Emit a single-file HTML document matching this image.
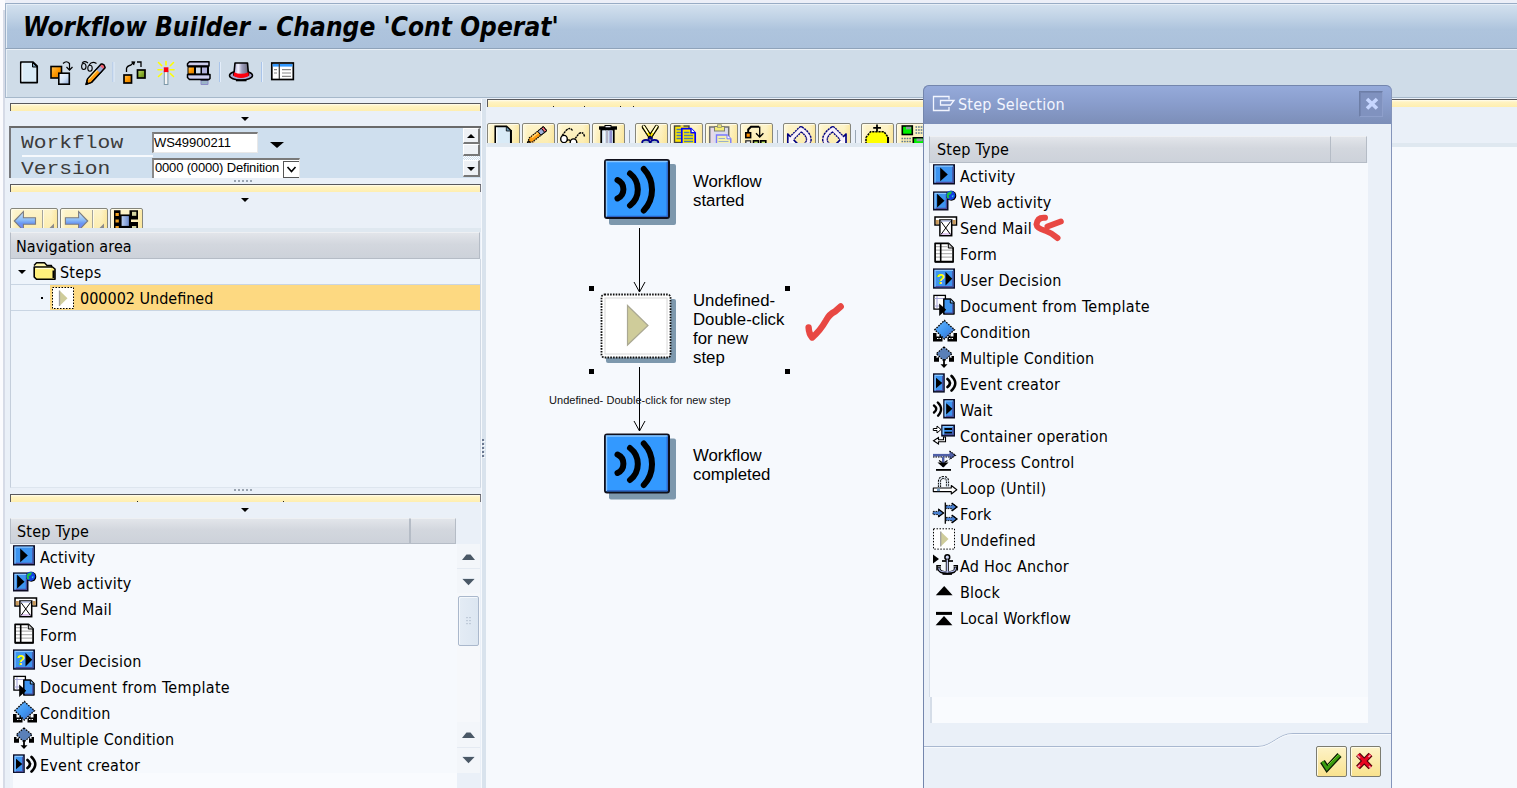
<!DOCTYPE html>
<html><head><meta charset="utf-8"><title>Workflow Builder</title>
<style>
html,body{margin:0;padding:0}
body{width:1517px;height:788px;overflow:hidden;position:relative;background:#eaf0f8;font-family:"DejaVu Sans Condensed","DejaVu Sans","Liberation Sans",sans-serif;font-size:16px;letter-spacing:.22px;color:#000}
.a{position:absolute}
.t{position:absolute;white-space:nowrap;line-height:20px}
#leftedge{left:0;top:0;width:5px;height:788px;background:linear-gradient(#fbfbfe 0 10px,transparent 10px),linear-gradient(90deg,#fbfbfe 0 3px,#d6dbe7 3px 5px)}
#topedge{left:0;top:0;width:1517px;height:3px;background:#ecEff8}
#title{left:5px;top:3px;width:1512px;height:44px;border-top:1px solid #98acc5;border-left:1px solid #9fb2c8;box-shadow:inset 1px 1px 0 #e6eef7;background:linear-gradient(#d3e1ef 0%,#c1d3e6 30%,#aec4dd 58%,#abc1db 100%)}
#title .t{left:17px;top:6px;letter-spacing:.05px;font:italic bold 26px/34px "DejaVu Sans Condensed","DejaVu Sans","Liberation Sans",sans-serif}
#tb{left:5px;top:48px;width:1512px;height:50px;background:#cfdce8;border-top:1px solid #8fa3ba;border-left:1px solid #a9bace;border-bottom:1px solid #a6b8ca;box-sizing:border-box;box-shadow:inset 1px 1px 0 #e9f0f7}
.ybar{position:absolute;height:7px;background:linear-gradient(#fffdf0 0,#fff3c2 2px,#feeeb0 100%);border-top:1px solid #58585c;border-left:1px solid #58585c;border-right:1px solid #77777c;box-sizing:content-box}
.tri{position:absolute;width:0;height:0;border-left:4px solid transparent;border-right:4px solid transparent;border-top:4px solid #000}

.mono{font-family:"Liberation Mono",monospace;font-size:19px;color:#3c3c3c;letter-spacing:0;transform-origin:0 50%;transform:scaleX(1.12)}
#form{left:9px;top:126px;width:472px;height:52px;background:#cfdfee;border-top:2px solid #6a6a6a;border-left:2px solid #77787c;box-sizing:border-box;overflow:hidden}
.inp{background:#fff;border-top:2px solid #7a7a7a;border-left:2px solid #8a8a8a;border-right:1px solid #e8e8e8;border-bottom:1px solid #e8e8e8;box-sizing:border-box;font-family:"Liberation Sans",sans-serif;font-size:13px;letter-spacing:0;overflow:hidden}
.inp .t{line-height:17px}
.sbtn{width:16px;height:15px;background:#eef1f5;border-top:1px solid #fff;border-left:1px solid #fff;border-right:2px solid #777;border-bottom:2px solid #777;box-sizing:border-box}
.grip{width:20px;height:2px;background:repeating-linear-gradient(90deg,#9aa4b0 0 2px,transparent 2px 4px)}
.ghdr{background:linear-gradient(#e2e5ea,#d3d7de 45%,#cdd2da);border:1px solid #b5bcc6;border-top-color:#eef0f3;box-sizing:border-box}
#tree{left:10px;top:259px;width:471px;height:229px;background:#eef4fb;border-left:1px solid #c4cedb;border-right:1px solid #d0d9e4;border-bottom:1px solid #dde5ee;box-sizing:border-box;overflow:hidden}
#list1{left:10px;top:544px;width:447px;height:229px;background:#f6f9fd;overflow:hidden}
.row{position:absolute;left:0;height:26px;width:100%}
.row .t{left:30px;top:4px}

.ybtn{top:0;width:33px;height:26px;box-sizing:border-box;background:linear-gradient(90deg,rgba(255,250,225,.9) 0,rgba(255,250,225,0) 5px,rgba(250,225,140,0) calc(100% - 6px),rgba(250,225,140,.6) 100%),linear-gradient(#fdf4cc,#fcebaa);border:1px solid #86867c;border-radius:2px;box-shadow:inset 1px 1px 0 #fffbe6}
#canvas{left:487px;top:147px;width:1030px;height:641px;background:#f6f9fd;overflow:hidden}

#dlg{left:923px;top:85px;width:469px;height:710px;background:#eaf0f8;border-radius:6px 6px 0 0;overflow:hidden}
#dlgb{left:923px;top:85px;width:469px;height:710px;border:1px solid #7486ad;border-right:1px solid #8595ba;border-radius:6px 6px 0 0;box-sizing:border-box;pointer-events:none}
#dtitle{left:0;top:0;width:469px;height:39px;background:linear-gradient(#96abdb 0%,#8a9ecd 45%,#7c8eb8 100%)}
#dclose{left:436px;top:6px;width:24px;height:26px;box-sizing:border-box;border:1px solid #6d7ea6;border-right-color:#8e9fcb;border-bottom-color:#8e9fcb;background:#8092bf;box-shadow:inset 1px 1px 0 #7485b1}
#list2{left:7px;top:78px;width:438px;height:534px;background:#f6f9fd;box-shadow:-1px 0 0 #d5dde8;overflow:hidden}
.dbtn{width:31px;height:31px;box-sizing:border-box;border:1px solid #7c7c70;border-radius:2px;background:linear-gradient(#fdf3c8,#f9e28e);box-shadow:inset 1px 1px 0 #fffbe6}
.ic{position:absolute;left:0;top:0}
svg{letter-spacing:0}

#navbtns{left:10px;top:208px;width:140px;height:20px;overflow:hidden}
#vsb{left:457px;top:544px;width:23px;height:229px}
</style></head><body>
<div class="a" id="topedge"></div>
<div class="a" id="leftedge"></div>
<div class="a" id="title"><div class="t">Workflow Builder - Change 'Cont Operat'</div></div>
<div class="a" id="tb"></div>
<svg class="a" style="left:10px;top:54px" width="300" height="40" viewBox="10 54 300 40">
 <defs>
  <linearGradient id="gOr" x1="0" y1="0" x2="1" y2="1"><stop offset="0" stop-color="#ffc45a"/><stop offset=".5" stop-color="#ff9800"/><stop offset="1" stop-color="#d67a00"/></linearGradient>
  <linearGradient id="gGr" x1="0" y1="0" x2="1" y2="1"><stop offset="0" stop-color="#c4dc7a"/><stop offset=".5" stop-color="#8cb030"/><stop offset="1" stop-color="#5c7c10"/></linearGradient>
  <linearGradient id="gBl" x1="0" y1="0" x2="1" y2="1"><stop offset="0" stop-color="#f4f9ff"/><stop offset=".55" stop-color="#d4e4f6"/><stop offset="1" stop-color="#8ca8d8"/></linearGradient>
  <linearGradient id="gLav" x1="0" y1="0" x2="0" y2="1"><stop offset="0" stop-color="#8c90c4"/><stop offset=".5" stop-color="#dcdcf4"/><stop offset="1" stop-color="#9c9ccc"/></linearGradient>
  <linearGradient id="gHat" x1="0" y1="0" x2="1" y2="0"><stop offset="0" stop-color="#9c9cc8"/><stop offset=".3" stop-color="#f4f4ff"/><stop offset=".55" stop-color="#a0a0c0"/><stop offset="1" stop-color="#686878"/></linearGradient>
 </defs>
 <!-- new -->
 <path d="M20.800 62H33L37.200 66.200V82.600H20.800Z" fill="#d9ebf7" stroke="#000" stroke-width="1.700" stroke-linejoin="round"/>
 <path d="M22 63.500V81.500" stroke="#fff" stroke-width="1"/><path d="M32.500 62.500V67H37Z" fill="#7aa0b8" stroke="#000" stroke-width="1"/>
 <!-- other object -->
 <rect x="51" y="66.500" width="10.500" height="11.500" fill="url(#gOr)" stroke="#000" stroke-width="1.600"/>
 <rect x="58.800" y="73.200" width="10.500" height="11" fill="url(#gBl)" stroke="#000" stroke-width="1.600"/>
 <path d="M63 63.500Q66.500 60 69.500 63.500V69.500M66.500 67L69.500 70.200L72.500 67" fill="none" stroke="#000" stroke-width="1.200"/>
 <!-- glasses pencil -->
 <g fill="none" stroke="#000" stroke-width="1.100"><ellipse cx="83.800" cy="66.500" rx="2.200" ry="3" fill="#d0dce8"/><ellipse cx="90" cy="68.300" rx="2.200" ry="3" fill="#d0dce8"/><path d="M82 63.500Q84 60 88 63M89 65Q92 60.500 96.500 63.500"/></g>
 <path d="M86 84.500L87.500 78.900L101 64.200Q104.500 63.300 105 67.800L91.500 82.500Z" fill="#ff9c10" stroke="#000" stroke-width="1.200" stroke-linejoin="round"/>
 <path d="M96.200 69.400L101 64.200Q104.500 63.300 105 67.800L100.200 73Z" fill="#9cacd8"/><path d="M99.600 65.700L101 64.200Q104.500 63.300 105 67.800L103.600 69.300Z" fill="#f06070"/>
 <path d="M88.500 79.300L97 70" stroke="#ffe890" stroke-width="1.500"/><path d="M86 84.500L86.900 81.300L89.200 83.400Z" fill="#000"/>
 <path d="M86 84.500L87.500 78.900L101 64.200Q104.500 63.300 105 67.800L91.500 82.500Z" fill="none" stroke="#000" stroke-width="1.300" stroke-linejoin="round"/>
 <!-- sep -->
 <path d="M113 62V82M219.500 62V82M261.500 62V82" stroke="#a9c4ea" stroke-width="1"/><path d="M114 62V82M220.500 62V82M262.500 62V82" stroke="#e4eefa" stroke-width="1"/>
 <!-- flow -->
 <rect x="124" y="75" width="7.500" height="8" fill="url(#gOr)" stroke="#000" stroke-width="1.700"/>
 <rect x="137.500" y="70" width="7.500" height="8" fill="url(#gGr)" stroke="#000" stroke-width="1.700"/>
 <path d="M126.500 72V68.500Q127 66 131 65L134 62M141 67V62H137M131.500 62L134.500 62.200L133.500 65" fill="none" stroke="#000" stroke-width="1.300"/>
 <!-- wand -->
 <rect x="164.300" y="71" width="3.600" height="13.500" fill="#f4f4f4" stroke="#7c98a8" stroke-width="1"/>
 <rect x="163.800" y="67.300" width="4.600" height="4.800" fill="#ff0010"/>
 <g stroke="#ffff00" stroke-width="1.600" stroke-linecap="round"><path d="M166 61.500V65M158 69.700H162M170 69.700H174M158.500 62.500L161.700 65.700M173.500 62.500L170.300 65.700M158.500 76.500L161.700 73.500M173.500 76.500L170.300 73.500"/></g>
 <!-- workflow container icon -->
 <path d="M189.500 61.800H209V66H187.500V63.800Z" fill="url(#gLav)" stroke="#000" stroke-width="1.500" stroke-linejoin="round"/>
 <rect x="187.500" y="66" width="21.500" height="8.500" fill="#000"/>
 <rect x="188.500" y="67.500" width="5.500" height="6" fill="url(#gOr)"/><rect x="196" y="67.500" width="4.500" height="6" fill="#d0dcec"/><rect x="202" y="67.500" width="5" height="6" fill="#b0b0dc"/>
 <path d="M187.500 74.500H210V78.500L209 79.500H189.500L187.500 77.500Z" fill="url(#gLav)" stroke="#000" stroke-width="1.500" stroke-linejoin="round"/>
 <path d="M201 80.500H208V84.500H201Z" fill="#9ab4c8" stroke="#8c8cc8" stroke-width="1"/><path d="M200.500 80H208.500" stroke="#000" stroke-width="1.200"/>
 <!-- hat -->
 <ellipse cx="241" cy="75.500" rx="11.500" ry="4.500" fill="#a8a8d0" stroke="#000" stroke-width="1.500"/>
 <path d="M235 63H247.500L248.500 75Q241 78.500 233.800 75Z" fill="url(#gHat)" stroke="#000" stroke-width="1.600" stroke-linejoin="round"/>
 <path d="M234 72.200Q241 75.500 248.500 72.200L248.800 76Q241 79.800 233.500 76Z" fill="#ff0010"/>
 <path d="M236 80.500H246.500" stroke="#000" stroke-width="1.600"/>
 <!-- layout -->
 <rect x="271.800" y="63" width="21.500" height="16.500" fill="#fff" stroke="#000" stroke-width="1.700"/>
 <rect x="272.700" y="64" width="19.700" height="2.600" fill="#3399ff"/>
 <path d="M279.300 63.500V79" stroke="#333" stroke-width="1.200"/>
 <g stroke="#888" stroke-width="1.200"><path d="M274 69.700H277M274 73H277M282 69.700H291M282 73H291M282 76.300H291"/></g>
</svg>
<!--LEFT-->
<div class="ybar" style="left:10px;top:103px;width:469px"></div>
<div class="tri" style="left:241px;top:117px"></div>
<div class="a" id="form">
  <div class="t mono" style="left:10px;top:5px">Workflow</div>
  <div class="a" style="left:11px;top:27px;width:131px;height:2px;background:#f6f9fd"></div>
  <div class="t mono" style="left:10px;top:31px">Version</div>
  <div class="a inp" style="left:141px;top:4px;width:106px;height:21px"><span class="t" style="left:0px;top:0px;letter-spacing:-.1px">WS49900211</span></div>
  <div class="tri" style="left:259px;top:14px;border-width:6px 7px 0 7px"></div>
  <div class="a inp" style="left:141px;top:30px;width:148px;height:22px"><span class="t" style="left:1px;top:-1px;font-size:13px;letter-spacing:-0.17px">0000 (0000) Definition</span>
    <div class="a" style="left:129px;top:1px;width:17px;height:17px;border:1px solid #555;background:#fff;box-sizing:border-box"><svg class="a" style="left:2px;top:3px" width="11" height="9" viewBox="0 0 11 9"><path d="M1.5 2 L5.5 6.5 L9.5 2" fill="none" stroke="#000" stroke-width="1.6"/></svg></div></div>
  <div class="a sbtn" style="left:452px;top:0px;width:17px;height:16px"><div class="tri" style="left:3px;top:5px;border-width:0 4px 4px 4px;border-top-color:transparent;border-bottom:4px solid #000"></div></div>
  <div class="a sbtn" style="left:452px;top:16px;width:17px;height:12px"></div><div class="a" style="left:452px;top:28px;width:17px;height:4px;background:repeating-conic-gradient(#fff 0 25%,#cfdfee 0 50%) 0 0/2px 2px"></div>
  <div class="a sbtn" style="left:452px;top:32px;width:17px;height:17px"><div class="tri" style="left:3px;top:6px"></div></div>
</div>
<div class="a grip" style="left:234px;top:180px"></div>
<div class="ybar" style="left:10px;top:184px;width:469px"></div>
<div class="tri" style="left:241px;top:198px"></div>
<div class="a" id="navbtns">
 <div class="a ybtn" style="left:0;width:48px"></div><div class="a ybtn" style="left:50px;width:48px"></div><div class="a ybtn" style="left:100px;width:33px"></div>
 <svg class="a" style="left:0;top:0" width="140" height="20" viewBox="10 208 140 20">
  <defs><linearGradient id="gAr" x1="0" y1="0" x2="0" y2="1"><stop offset="0" stop-color="#d0e8fc"/><stop offset=".45" stop-color="#8cbcf6"/><stop offset=".62" stop-color="#6a98f2"/><stop offset="1" stop-color="#7c7cf6"/></linearGradient>
  <linearGradient id="gMid" x1="0" y1="0" x2="1" y2="0"><stop offset="0" stop-color="#c0d4f4"/><stop offset="1" stop-color="#6888cc"/></linearGradient></defs>
  <path d="M14.300 221L23.400 211.500V217.700H35.500V224.300H23.400V230.500Z" fill="url(#gAr)" stroke="#7c7c80" stroke-width="1.100"/>
  <path d="M87.700 221L78.600 211.500V217.700H65.400V224.300H78.600V230.500Z" fill="url(#gAr)" stroke="#7c7c80" stroke-width="1.100"/>
  <path d="M42.500 210V228M92.500 210V228" stroke="#a4a49c" stroke-width="1"/><path d="M43.500 210V228M93.500 210V228" stroke="#fffbe8" stroke-width="1"/>
  <path d="M49 228.500L54 223.500V228.500ZM99 228.500L104 223.500V228.500Z" fill="#8c8c8c"/>
  <path d="M114 210.300H120.500V214.500H129.500V210.300H138V219.500H131V222H138V230H114Z" fill="#000"/>
  <rect x="121" y="215.500" width="8.500" height="11" fill="url(#gMid)" stroke="#000" stroke-width="1.200"/>
  <g fill="#f0a020"><rect x="115.500" y="213" width="3.300" height="3"/><rect x="115.500" y="219.500" width="3.300" height="3"/><rect x="115.500" y="226" width="3.300" height="3"/></g>
  <g fill="#d4d4a0"><rect x="132" y="211.800" width="4.300" height="4"/><rect x="132" y="226" width="4.300" height="4"/></g>
 </svg>
</div>
<div class="a" style="left:10px;top:228px;width:471px;height:4px;background:#dfe8f0"></div>
<div class="a ghdr" style="left:10px;top:232px;width:470px;height:27px"><span class="t" style="left:5px;top:4px;letter-spacing:.1px">Navigation area</span></div>
<div class="a" id="tree">

  <div class="tri" style="left:7px;top:11px;border-width:4px 4px 0 4px"></div>
  <span class="t" style="left:49px;top:4px">Steps</span>
  <div class="a" style="left:0;top:25px;width:470px;height:1px;background:#c9d5e3"></div>
  <div class="a" style="left:39px;top:26px;width:431px;height:25px;background:#fdd981"></div>
  <div class="a" style="left:0;top:51px;width:470px;height:1px;background:#c9d5e3"></div>
  <div class="a" style="left:30px;top:38px;width:2px;height:2px;background:#000"></div>
  <span class="t" style="left:69px;top:30px;letter-spacing:0">000002 Undefined</span>
<svg class="a" style="left:-1px;top:0" width="80" height="52" viewBox="10 258 80 52">
  <path d="M34 264.500L36.500 261.800H44.500L47 264.500H51.500V270" fill="#fff8b0" stroke="#000" stroke-width="1.400" stroke-linejoin="round"/>
  <path d="M34.200 266H52.500L55 268V278.300H36.500L34.200 276Z" fill="#fff07c" stroke="#000" stroke-width="1.600" stroke-linejoin="round"/><path d="M53.500 269.500V277" stroke="#000" stroke-width="2"/><path d="M36 267.500H51" stroke="#fffcd8" stroke-width="1.200"/>
  <rect x="52.500" y="286.500" width="21" height="21" fill="#fff" stroke="#000" stroke-width="1" stroke-dasharray="1.500 1.500"/>
  <path d="M59.500 289.500V305L67.500 297.200Z" fill="#cfcc9a"/><path d="M59.500 289.500V305" stroke="#a0a0a0" stroke-width="1.300"/>
 </svg>
</div>
<div class="a grip" style="left:234px;top:489px"></div>
<div class="ybar" style="left:10px;top:494px;width:469px;height:7px"></div>
<div class="tri" style="left:241px;top:508px"></div>
<div class="a" style="left:137px;top:501px;width:1px;height:1px;background:#222"></div><div class="a" style="left:283px;top:501px;width:1px;height:1px;background:#222"></div>
<div class="a ghdr" style="left:10px;top:518px;width:400px;height:26px"><span class="t" style="left:6px;top:3px" style="letter-spacing:1px">Step Type</span></div>
<div class="a ghdr" style="left:410px;top:518px;width:46px;height:26px"></div>
<div class="a" id="list1">
 <div class="row" style="top:0"><svg class="ic" width="30" height="26" viewBox="0 0 30 26"><rect x="3.75" y="1.95" width="20.5" height="18.8" fill="#3d94f0" stroke="#0c0c24" stroke-width="1.500"/><path d="M5 19.5V3.2H23" fill="none" stroke="#8cc6ff" stroke-width="1.200"/><path d="M22.9 3.8V19.4H5.6" fill="none" stroke="#4c4c9c" stroke-width="1.200"/><path d="M10.2 4.6V18.3L17.8 11.45Z" fill="#000"/></svg><span class="t">Activity</span></div>
 <div class="row" style="top:26px"><svg class="ic" width="30" height="26" viewBox="0 0 30 26"><rect x="3.75" y="3.15" width="14.0" height="17.6" fill="#3d94f0" stroke="#0c0c24" stroke-width="1.500"/><path d="M5 19.5V4.4H16.5" fill="none" stroke="#8cc6ff" stroke-width="1.200"/><path d="M16.4 5.0V19.4H5.6" fill="none" stroke="#4c4c9c" stroke-width="1.200"/><path d="M7.1 4.8V18.6L14.5 11.700000000000001Z" fill="#000"/><circle cx="21.300" cy="6.700" r="5" fill="#000"/><circle cx="20.600" cy="6.300" r="4.600" fill="#1040e0"/><path d="M17 4.500Q19 2 22 2.500L21 5L18.500 6.500L19.500 9L17.500 9.500Q16 7 17 4.500Z" fill="#20c040"/><path d="M21.500 7L23.500 6L23 8.500Z" fill="#30d8f0"/></svg><span class="t">Web activity</span></div>
 <div class="row" style="top:52px"><svg class="ic" width="30" height="26" viewBox="0 0 30 26"><rect x="5" y="2" width="21.500" height="8" fill="#fff" stroke="#000" stroke-width="1.500"/><rect x="5.800" y="5" width="3" height="4.300" fill="#c89858"/><rect x="22.700" y="5" width="3" height="4.300" fill="#c89858"/><rect x="9.900" y="5" width="11.800" height="15.700" fill="#fff" stroke="#000" stroke-width="1.500"/><rect x="10.700" y="5.300" width="10.200" height="1.700" fill="#c8d0f0"/><rect x="10.700" y="18" width="10.200" height="1.900" fill="#e0c8f0"/><path d="M11 6.500L20.500 19.500M20.500 6.500L11 19.500" stroke="#000" stroke-width="1"/></svg><span class="t">Send Mail</span></div>
 <div class="row" style="top:78px"><svg class="ic" width="30" height="26" viewBox="0 0 30 26"><path d="M5.100 2.300H18.500L23.100 6.900V20.700H5.100Z" fill="#fff" stroke="#000" stroke-width="1.700" stroke-linejoin="round"/><path d="M18.300 2.500V7H23" fill="#ccc" stroke="#000" stroke-width="1"/><g stroke="#b4b4b4" stroke-width="1.300"><path d="M6 5.700H17.500M6 9.200H22M6 12.700H22M6 16.200H22"/></g><path d="M10.700 2.500V20.500" stroke="#000" stroke-width="1.600"/><path d="M5 21H23.500" stroke="#000" stroke-width="1.400"/></svg><span class="t">Form</span></div>
 <div class="row" style="top:104px"><svg class="ic" width="30" height="26" viewBox="0 0 30 26"><rect x="3.75" y="2.15" width="20.5" height="18.8" fill="#3d94f0" stroke="#0c0c24" stroke-width="1.500"/><path d="M5 19.7V3.4H23" fill="none" stroke="#8cc6ff" stroke-width="1.200"/><path d="M22.9 4.0V19.599999999999998H5.6" fill="none" stroke="#4c4c9c" stroke-width="1.200"/><path d="M15.5 4.8V18.5L22.2 11.65Z" fill="#000"/><text x="6.500" y="16.500" font-family="Liberation Sans, sans-serif" font-weight="bold" font-size="14" fill="#ffff00">?</text></svg><span class="t">User Decision</span></div>
 <div class="row" style="top:130px"><svg class="ic" width="30" height="26" viewBox="0 0 30 26"><rect x="3.900" y="2.400" width="11.500" height="13.700" fill="#fff" stroke="#000" stroke-width="1.300"/><path d="M7 3V15.500M4.500 5.500H15M4.500 13H9" stroke="#a8a8d8" stroke-width="1.100" fill="none"/><path d="M13.800 6.100H20.500L24 9.600V20.900H13.800Z" fill="#3d94f0" stroke="#000" stroke-width="1.500" stroke-linejoin="round"/><path d="M20.300 6.300V10H24" fill="#8cc6ff" stroke="#000" stroke-width="1"/><path d="M22.800 11V20H15" fill="none" stroke="#4c4c9c" stroke-width="1.200"/><path d="M9.2 10.5V23L16.2 16.75Z" fill="#000"/></svg><span class="t" style="letter-spacing:.34px">Document from Template</span></div>
 <div class="row" style="top:156px"><svg class="ic" width="30" height="26" viewBox="0 0 30 26"><defs><linearGradient id="gc" x1="0" y1="0" x2="1" y2="1"><stop offset="0" stop-color="#6ab8ff"/><stop offset=".55" stop-color="#3d94f0"/><stop offset="1" stop-color="#5060b0"/></linearGradient></defs><path d="M14.300 1.500L24.500 10.700L14.300 20L4.800 10.700Z" fill="url(#gc)" stroke="#000" stroke-width="1.300" stroke-dasharray="1.600 1.100"/><path d="M3 14H6.500V17.500H9.500V15.500L12.500 18.500V22.500H3ZM27 14H23.500V17.500H20.500V15.500L17.500 18.500V22.500H27Z" fill="#000"/><path d="M7 19.500H11M19 19.500H23" stroke="#fff" stroke-width="1" stroke-dasharray="1.500 1"/></svg><span class="t">Condition</span></div>
 <div class="row" style="top:182px"><svg class="ic" width="30" height="26" viewBox="0 0 30 26"><path d="M14 2L22 8.700L14 16L6.300 8.700Z" fill="#5a80b8" stroke="#000" stroke-width="1.200" stroke-dasharray="1.600 1.100"/><path d="M4 11H6.500V13L9 12V16.700H4ZM24 11H21.500V13L19 12V16.700H24Z" fill="#000"/><path d="M14 14V20" stroke="#000" stroke-width="1.800"/><path d="M10.500 19.200H17.500L14 23Z" fill="#000"/></svg><span class="t">Multiple Condition</span></div>
 <div class="row" style="top:208px"><svg class="ic" width="30" height="26" viewBox="0 0 30 26"><rect x="3.75" y="3.05" width="10.3" height="17.8" fill="#3d94f0" stroke="#0c0c24" stroke-width="1.500"/><path d="M5 19.6V4.3H12.8" fill="none" stroke="#8cc6ff" stroke-width="1.200"/><path d="M12.700000000000001 4.9V19.5H5.6" fill="none" stroke="#4c4c9c" stroke-width="1.200"/><path d="M6 6.8V17.2L12.3 12.0Z" fill="#000"/><g fill="none" stroke="#000" stroke-linecap="round"><path d="M17.500 8Q22.500 12 17.500 16" stroke-width="2.800"/><path d="M21.500 5Q29 12.200 21.500 19.500" stroke-width="2.600" stroke-dasharray="2.500 .6"/></g></svg><span class="t">Event creator</span></div>
</div>
<div class="a" id="vsb">
 <div class="a" style="left:0;top:0;width:23px;height:229px;background:#f6f8fb"></div>
 <div class="a" style="left:0;top:0;width:23px;height:49px;background:#f3f6fa"></div>
 <div class="a" style="left:0;top:24px;width:23px;height:1px;background:#e4eaf2"></div>
 <div class="a" style="left:0;top:178px;width:23px;height:51px;background:#f3f6fa"></div>
 <div class="a" style="left:0;top:203px;width:23px;height:1px;background:#e4eaf2"></div>
 <div class="a" style="left:1px;top:52px;width:21px;height:50px;box-sizing:border-box;border:1px solid #aab8cc;border-radius:2px;background:linear-gradient(90deg,#e4ecf5,#dce6f1);box-shadow:inset 1px 1px 0 #f4f8fc"></div>
 <svg class="a" style="left:0;top:0" width="23" height="229" viewBox="0 0 23 229"><g fill="#4a5866"><path d="M5 16H18L13.500 10.500H9.500Z"/><path d="M5.500 35H17.500L11.500 41.300Z"/><path d="M5 194H18L13.500 188.500H9.500Z"/><path d="M5.500 213H17.500L11.500 219.300Z"/></g><g stroke="#dde4ec" stroke-width="1"><path d="M5.500 34.500H17.500M5.500 212.500H17.500"/></g>
 <g fill="#a0aec0"><rect x="9.500" y="73" width="1" height="1.200"/><rect x="12.500" y="73" width="1" height="1.200"/><rect x="9.500" y="76" width="1" height="1.200"/><rect x="12.500" y="76" width="1" height="1.200"/><rect x="9.500" y="79" width="1" height="1.200"/><rect x="12.500" y="79" width="1" height="1.200"/></g></svg>
</div>
<div class="a" style="left:10px;top:773px;width:3px;height:15px;background:#eef3f9"></div>
<div class="a" style="left:13px;top:773px;width:444px;height:15px;background:#f9fbfe"></div>
<div class="a" style="left:481px;top:99px;width:1px;height:689px;background:#f6f9fd"></div><div class="a" style="left:482px;top:99px;width:4px;height:689px;background:#d9e3ed"></div><div class="a" style="left:486px;top:147px;width:1px;height:641px;background:#f6f9fd"></div>
<div class="a" style="left:482px;top:439px;width:2px;height:18px;background:repeating-linear-gradient(#6a7890 0 2px,transparent 2px 4px)"></div><div class="a" style="left:483px;top:440px;width:2px;height:18px;background:repeating-linear-gradient(transparent 0 1px,#fff 1px 2px,transparent 2px 4px);opacity:.8"></div>
<!--RIGHT-->
<div class="ybar" style="left:487px;top:99px;width:1030px;height:7px;border-right:0"></div>
<div class="a" style="left:553px;top:106px;width:1px;height:1px;background:#222"></div><div class="a" style="left:584px;top:106px;width:1px;height:1px;background:#222"></div><div class="a" style="left:620px;top:106px;width:1px;height:1px;background:#222"></div><div class="a" style="left:633px;top:106px;width:1px;height:1px;background:#222"></div>
<div class="a" style="left:487px;top:123px;width:440px;height:20px;overflow:hidden"><div class="a ybtn" style="left:0px" id="rb0"></div><div class="a ybtn" style="left:35px" id="rb1"></div><div class="a ybtn" style="left:70px" id="rb2"></div><div class="a ybtn" style="left:105px" id="rb3"></div><div class="a ybtn" style="left:148px" id="rb4"></div><div class="a ybtn" style="left:183px" id="rb5"></div><div class="a ybtn" style="left:218px" id="rb6"></div><div class="a ybtn" style="left:253px" id="rb7"></div><div class="a ybtn" style="left:296px" id="rb8"></div><div class="a ybtn" style="left:331px" id="rb9"></div><div class="a ybtn" style="left:374px" id="rb10"></div><div class="a ybtn" style="left:409px" id="rb11"></div></div>
<div class="a" style="left:629px;top:130px;width:1px;height:13px;background:#9aa7b5"></div><div class="a" style="left:777px;top:130px;width:1px;height:13px;background:#9aa7b5"></div><div class="a" style="left:855px;top:130px;width:1px;height:13px;background:#9aa7b5"></div>
<svg class="a" style="left:487px;top:123px" width="436" height="20" viewBox="487 123 436 20">
 <!-- new -->
 <path d="M495.300 144V126.300H506.500L510.800 130.600V144Z" fill="#d9ebf7" stroke="#000" stroke-width="1.700"/><path d="M511.200 130V144" stroke="#000" stroke-width="1.400"/>
 <path d="M496.700 127.500V144" stroke="#fff" stroke-width="1.200"/><path d="M506.300 126.500V131H510.800Z" fill="#6a9ab8" stroke="#000" stroke-width=".8"/>
 <!-- pencil -->
 <path d="M527.500 142.800L529.400 137.800L543.400 126.700L546.600 130.700L532.600 141.800Z" fill="#ff9c10" stroke="#000" stroke-width="1.200" stroke-dasharray="1.600 .8" stroke-linejoin="round"/>
 <path d="M537.700 131.200L543.400 126.700L546.600 130.700L540.900 135.200Z" fill="#9cb0dc" stroke="#000" stroke-width="1"/>
 <path d="M541.400 128.300L543.400 126.700L546.600 130.700L544.600 132.300Z" fill="#f06878" stroke="#000" stroke-width="1"/>
 <path d="M532 137.500L538 132.700" stroke="#ffe088" stroke-width="1.200"/><path d="M527.500 142.800L528.600 140L530.500 142Z" fill="#000"/><path d="M531 142.500L534 142.500L535 140.500Z" fill="#b08050"/>
 <!-- glasses -->
 <g fill="none" stroke="#000" stroke-width="1.400" stroke-dasharray="2.200 .7"><path d="M572.500 130.500Q570 126.500 566 130.500L561.500 136.500"/><path d="M584.500 136.500Q583.500 131 579 133.500L574.500 139.500"/></g>
 <ellipse cx="564" cy="139" rx="3.300" ry="3.600" fill="#fff" stroke="#000" stroke-width="1.400"/><ellipse cx="573.500" cy="142.500" rx="3.300" ry="3.600" fill="#fff" stroke="#000" stroke-width="1.400"/><path d="M567 140.500Q569 139 570.500 141" fill="none" stroke="#000" stroke-width="1.300"/>
 <!-- trash -->
 <rect x="601.200" y="129.500" width="12.600" height="15" fill="#cfe0f0" stroke="#000" stroke-width="1.700"/>
 <rect x="606" y="130.500" width="2" height="13" fill="#b4b4c4"/><rect x="609.500" y="130.500" width="2.500" height="13" fill="#9090d0"/><rect x="603.500" y="130.500" width="1.200" height="13" fill="#fff"/>
 <rect x="599" y="126.300" width="18" height="3.400" fill="#000"/><rect x="604.500" y="125" width="7" height="1.800" fill="#000"/><rect x="605.500" y="126" width="5" height="1.300" fill="#e8e8f0"/>
 <!-- scissors -->
 <g stroke-linecap="round"><path d="M643.800 127L650.800 137.500M656.700 127L649.700 137.500" stroke="#000" stroke-width="4.200" stroke-dasharray="1.500 1.200"/><path d="M643.800 127L650.800 137.500M656.700 127L649.700 137.500" stroke="#000" stroke-width="3.400" opacity=".55"/><path d="M643.700 126.500L650.200 136.800M656.800 126.500L650.300 136.800" stroke="#ffe800" stroke-width="2"/><path d="M643.600 126.200L647.500 132.500M656.900 126.200L653 132.500" stroke="#fff" stroke-width="1.400"/></g>
 <circle cx="650.200" cy="136.700" r="1.300" fill="#000"/>
 <ellipse cx="646" cy="142.500" rx="3.800" ry="2.700" fill="#a8c0c8" stroke="#000090" stroke-width="1.800"/><ellipse cx="654.500" cy="142.500" rx="3.800" ry="2.700" fill="#a8c0c8" stroke="#000090" stroke-width="1.800"/>
 <path d="M648 139.500L650.200 137.500L652.500 139.500" fill="none" stroke="#000090" stroke-width="1.800"/>
 <!-- copy -->
 <rect x="674.500" y="126" width="14.500" height="16.500" fill="#ffe800" stroke="#444" stroke-width="1.400"/><rect x="680.500" y="125" width="3" height="2" fill="#e8d860"/>
 <g stroke="#4a78b0" stroke-width="1.300"><path d="M676.500 129.500H681M676.500 132.500H681M676.500 135.500H681M676.500 138.500H681"/></g>
 <path d="M681.800 144V128.600H691L695.200 132.800V144Z" fill="#ffe800" stroke="#0000ff" stroke-width="1.700"/><path d="M691 128.600V132.800H695.200" fill="#fff" stroke="#0000ff" stroke-width="1.400"/>
 <g stroke="#4a78b0" stroke-width="1.300"><path d="M684 132.500H689.500M684 135.500H693M684 138.500H693M684 141.500H693"/></g>
 <!-- paste (dim) -->
 <rect x="709.700" y="127" width="19" height="17" fill="#dcdcec" stroke="#707070" stroke-width="1.500"/><rect x="711" y="128" width="2.500" height="15" fill="#e8d8e8"/>
 <rect x="714.500" y="126.500" width="10" height="4.500" fill="#f4ec78" stroke="#808070" stroke-width="1"/><rect x="717.500" y="124.800" width="4" height="2.500" fill="#f4ec78" stroke="#909070" stroke-width=".8"/>
 <path d="M716.500 144V135H727L730.800 138.800V144Z" fill="#f4f0b0" stroke="#7878ff" stroke-width="1.400"/><path d="M727 135V138.800H730.800" fill="#fff" stroke="#7878ff" stroke-width="1"/>
 <g stroke="#9ab0c8" stroke-width="1.200"><path d="M718.500 138.500H725M718.500 141.500H728.500"/></g>
 <!-- flow -->
 <rect x="745.800" y="132.800" width="4.800" height="4.800" fill="#ff9000" stroke="#000" stroke-width="1.600"/>
 <path d="M748.200 132V129.500L751 126.800H759" fill="none" stroke="#000" stroke-width="2"/><path d="M759.700 126.500V137M756 133.300L759.700 137L763.400 133.300" fill="none" stroke="#000" stroke-width="1.300"/>
 <rect x="745.800" y="140.800" width="4.800" height="5" fill="#f0f0f0" stroke="#333" stroke-width="1.300"/><rect x="753.500" y="140.800" width="5" height="5" fill="#b8e060" stroke="#000" stroke-width="1.600"/><rect x="760.800" y="140.800" width="5" height="5" fill="#b8e060" stroke="#000" stroke-width="1.600"/>
 <!-- undo / redo -->
 <g fill="none" stroke-linejoin="round" transform="translate(0 1.500)"><path d="M806 144Q813.500 136 801 127.500L790.500 138" stroke="#000080" stroke-width="6" stroke-dasharray="1.700 1"/><path d="M806 144Q813.500 136 801 127.500L790.500 138" stroke="#000080" stroke-width="5.200" opacity=".45"/>
 <path d="M787.800 132.500V142.300H797.600Z" fill="#fff" stroke="#000080" stroke-width="1.700"/><path d="M806 144Q813.500 136 801 127.500L790.500 138" stroke="#f8f0fc" stroke-width="3.200"/><path d="M789.500 140.500L793 137" stroke="#f8f0fc" stroke-width="3"/>
 <path d="M827.8 144Q820.3 136 832.8 127.500L843.3 138" stroke="#000080" stroke-width="6" stroke-dasharray="1.700 1"/><path d="M827.8 144Q820.3 136 832.8 127.500L843.3 138" stroke="#000080" stroke-width="5.200" opacity=".45"/>
 <path d="M846.0 132.500V142.300H836.2Z" fill="#fff" stroke="#000080" stroke-width="1.700"/><path d="M827.8 144Q820.3 136 832.8 127.500L843.3 138" stroke="#f8f0fc" stroke-width="3.200"/><path d="M844.3 140.500L840.8 137" stroke="#f8f0fc" stroke-width="3"/></g>
 <!-- yellow -->
 <path d="M866 144V137.500L870.500 131.800H884L888.300 137.500V144Z" fill="#ffff00" stroke="#000" stroke-width="1.500" stroke-dasharray="2.200 .9" stroke-linejoin="round"/><path d="M888 137V144" stroke="#000" stroke-width="2"/>
 <path d="M877 124.500V131.500M873.200 127.800H881" stroke="#000" stroke-width="1.800"/>
 <!-- variant -->
 <rect x="902.300" y="126" width="10" height="8.500" fill="#00f000" stroke="#000" stroke-width="1.600"/><rect x="906" y="126.800" width="5" height="2.600" fill="#909aa0"/>
 <g stroke="#5a7890" stroke-width="1.300" stroke-dasharray="1.600 1"><path d="M915.500 127H924M915.500 130H924M915.500 133H924M901.500 138.500H911M901.500 141.500H911"/></g>
 <rect x="913.300" y="137.800" width="11" height="8" fill="#00f000" stroke="#000" stroke-width="1.600"/><rect x="916.500" y="138.600" width="6" height="2.600" fill="#909aa0"/>
</svg>
<div class="a" style="left:487px;top:143px;width:1030px;height:4px;background:#dfe8f0"></div>
<div class="a" id="canvas">
 <svg class="a" style="left:0;top:0" width="440" height="641" viewBox="487 147 440 641" font-family="Liberation Sans, sans-serif">
  
  <g transform="translate(604 159)"><rect x="5" y="5" width="67" height="61" rx="2" fill="#7d98ad"/><rect x="1" y="1" width="64" height="58" rx="2" fill="#3399ff" stroke="#10101c" stroke-width="2"/><path d="M2.5 57.5V2.5H63.5" fill="none" stroke="#8cc8ff" stroke-width="1.4"/><path d="M63.2 3V57.3H3" fill="none" stroke="#2a3a9a" stroke-width="1" opacity=".7"/>
    <g fill="none" stroke="#000" stroke-width="6" stroke-linecap="round"><path d="M13.500 21A10.200 10.200 0 0 1 13.500 39.500"/><path d="M26 14.500A20.300 20.300 0 0 1 26 46.500"/><path d="M39.800 10A30.300 30.300 0 0 1 39.800 51.500"/></g></g>
  <g transform="translate(604 433.500)"><rect x="5" y="5" width="67" height="61" rx="2" fill="#7d98ad"/><rect x="1" y="1" width="64" height="58" rx="2" fill="#3399ff" stroke="#10101c" stroke-width="2"/><path d="M2.5 57.5V2.5H63.5" fill="none" stroke="#8cc8ff" stroke-width="1.4"/><path d="M63.2 3V57.3H3" fill="none" stroke="#2a3a9a" stroke-width="1" opacity=".7"/>
    <g fill="none" stroke="#000" stroke-width="6" stroke-linecap="round"><path d="M13.500 21A10.200 10.200 0 0 1 13.500 39.500"/><path d="M26 14.500A20.300 20.300 0 0 1 26 46.500"/><path d="M39.800 10A30.300 30.300 0 0 1 39.800 51.500"/></g></g>
  <g stroke="#000" stroke-width="1" fill="none"><path d="M639.500 228V292M634 282L639.500 292L645 282"/><path d="M639.500 367V431M634 421L639.500 431L645 421"/></g>
  <rect x="606" y="299" width="70" height="64" rx="2" fill="#7d98ad"/>
  <rect x="601.500" y="294.500" width="69" height="63" rx="3" fill="#fff" stroke="#111" stroke-width="1.8" stroke-dasharray="1.600 1.200"/>
  <rect x="605" y="298" width="62" height="56" fill="none" stroke="#d8d8d8" stroke-width="1"/>
  <path d="M627.500 305.500V345L648 325.500Z" fill="#cfcc9a" stroke="#aaa892" stroke-width="1.2"/>
  <g fill="#000"><rect x="589" y="286" width="5" height="5"/><rect x="785" y="286" width="5" height="5"/><rect x="589" y="369" width="5" height="5"/><rect x="785" y="369" width="5" height="5"/></g>
  <g font-size="16.8" fill="#000"><text x="693" y="187">Workflow</text><text x="693" y="206">started</text>
  <text x="693" y="306">Undefined-</text><text x="693" y="325">Double-click</text><text x="693" y="344">for new</text><text x="693" y="363">step</text>
  <text x="693" y="461">Workflow</text><text x="693" y="480">completed</text></g>
  <text x="549" y="404" font-size="11" letter-spacing="0.05" fill="#111">Undefined- Double-click for new step</text>
  <path d="M808.600 327.500Q809 334 812.200 337.500Q820 331 826 320.500Q829.500 314 835 311.500L840.700 306.500" fill="none" stroke="#e84843" stroke-width="6.400" stroke-linecap="round" stroke-linejoin="round"/>
 </svg>
</div>
<!--DIALOG-->
<div class="a" id="dlg">
 <div class="a" id="dtitle"><span class="t" style="left:35px;top:10px;color:#f2f5ff">Step Selection</span>
  <svg class="a" style="left:9px;top:10px" width="24" height="18" viewBox="0 0 24 18"><path d="M17 4.500V1.500H1.500V15.500H17V12" fill="none" stroke="#f2f5ff" stroke-width="1.3"/><path d="M8.500 5.500H22L18.500 10H8.500Z" fill="none" stroke="#f2f5ff" stroke-width="1.3"/></svg>
  <div class="a" id="dclose"><svg width="18" height="18" viewBox="0 0 18 18" class="a" style="left:2.500px;top:3px"><path d="M4 4L14 13.500M14 4L4 13.500" stroke="#c6d6ff" stroke-width="3.600"/></svg></div>
 </div>
 <div class="a ghdr" style="left:6px;top:51px;width:402px;height:27px"><span class="t" style="left:7px;top:3px" style="letter-spacing:1px">Step Type</span></div>
 <div class="a ghdr" style="left:407px;top:51px;width:37px;height:27px"></div>
 <div class="a" id="list2">
 <div class="row" style="top:0px"><svg class="ic" width="30" height="26" viewBox="0 0 30 26"><rect x="3.75" y="1.95" width="20.5" height="18.8" fill="#3d94f0" stroke="#0c0c24" stroke-width="1.500"/><path d="M5 19.5V3.2H23" fill="none" stroke="#8cc6ff" stroke-width="1.200"/><path d="M22.9 3.8V19.4H5.6" fill="none" stroke="#4c4c9c" stroke-width="1.200"/><path d="M10.2 4.6V18.3L17.8 11.45Z" fill="#000"/></svg><span class="t">Activity</span></div>
 <div class="row" style="top:26px"><svg class="ic" width="30" height="26" viewBox="0 0 30 26"><rect x="3.75" y="3.15" width="14.0" height="17.6" fill="#3d94f0" stroke="#0c0c24" stroke-width="1.500"/><path d="M5 19.5V4.4H16.5" fill="none" stroke="#8cc6ff" stroke-width="1.200"/><path d="M16.4 5.0V19.4H5.6" fill="none" stroke="#4c4c9c" stroke-width="1.200"/><path d="M7.1 4.8V18.6L14.5 11.700000000000001Z" fill="#000"/><circle cx="21.300" cy="6.700" r="5" fill="#000"/><circle cx="20.600" cy="6.300" r="4.600" fill="#1040e0"/><path d="M17 4.500Q19 2 22 2.500L21 5L18.500 6.500L19.500 9L17.500 9.500Q16 7 17 4.500Z" fill="#20c040"/><path d="M21.500 7L23.500 6L23 8.500Z" fill="#30d8f0"/></svg><span class="t">Web activity</span></div>
 <div class="row" style="top:52px"><svg class="ic" width="30" height="26" viewBox="0 0 30 26"><rect x="5" y="2" width="21.500" height="8" fill="#fff" stroke="#000" stroke-width="1.500"/><rect x="5.800" y="5" width="3" height="4.300" fill="#c89858"/><rect x="22.700" y="5" width="3" height="4.300" fill="#c89858"/><rect x="9.900" y="5" width="11.800" height="15.700" fill="#fff" stroke="#000" stroke-width="1.500"/><rect x="10.700" y="5.300" width="10.200" height="1.700" fill="#c8d0f0"/><rect x="10.700" y="18" width="10.200" height="1.900" fill="#e0c8f0"/><path d="M11 6.500L20.500 19.500M20.500 6.500L11 19.500" stroke="#000" stroke-width="1"/></svg><span class="t">Send Mail</span></div>
 <div class="row" style="top:78px"><svg class="ic" width="30" height="26" viewBox="0 0 30 26"><path d="M5.100 2.300H18.500L23.100 6.900V20.700H5.100Z" fill="#fff" stroke="#000" stroke-width="1.700" stroke-linejoin="round"/><path d="M18.300 2.500V7H23" fill="#ccc" stroke="#000" stroke-width="1"/><g stroke="#b4b4b4" stroke-width="1.300"><path d="M6 5.700H17.500M6 9.200H22M6 12.700H22M6 16.200H22"/></g><path d="M10.700 2.500V20.500" stroke="#000" stroke-width="1.600"/><path d="M5 21H23.500" stroke="#000" stroke-width="1.400"/></svg><span class="t">Form</span></div>
 <div class="row" style="top:104px"><svg class="ic" width="30" height="26" viewBox="0 0 30 26"><rect x="3.75" y="2.15" width="20.5" height="18.8" fill="#3d94f0" stroke="#0c0c24" stroke-width="1.500"/><path d="M5 19.7V3.4H23" fill="none" stroke="#8cc6ff" stroke-width="1.200"/><path d="M22.9 4.0V19.599999999999998H5.6" fill="none" stroke="#4c4c9c" stroke-width="1.200"/><path d="M15.5 4.8V18.5L22.2 11.65Z" fill="#000"/><text x="6.500" y="16.500" font-family="Liberation Sans, sans-serif" font-weight="bold" font-size="14" fill="#ffff00">?</text></svg><span class="t">User Decision</span></div>
 <div class="row" style="top:130px"><svg class="ic" width="30" height="26" viewBox="0 0 30 26"><rect x="3.900" y="2.400" width="11.500" height="13.700" fill="#fff" stroke="#000" stroke-width="1.300"/><path d="M7 3V15.500M4.500 5.500H15M4.500 13H9" stroke="#a8a8d8" stroke-width="1.100" fill="none"/><path d="M13.800 6.100H20.500L24 9.600V20.900H13.800Z" fill="#3d94f0" stroke="#000" stroke-width="1.500" stroke-linejoin="round"/><path d="M20.300 6.300V10H24" fill="#8cc6ff" stroke="#000" stroke-width="1"/><path d="M22.800 11V20H15" fill="none" stroke="#4c4c9c" stroke-width="1.200"/><path d="M9.2 10.5V23L16.2 16.75Z" fill="#000"/></svg><span class="t" style="letter-spacing:.34px">Document from Template</span></div>
 <div class="row" style="top:156px"><svg class="ic" width="30" height="26" viewBox="0 0 30 26"><defs><linearGradient id="gc2" x1="0" y1="0" x2="1" y2="1"><stop offset="0" stop-color="#6ab8ff"/><stop offset=".55" stop-color="#3d94f0"/><stop offset="1" stop-color="#5060b0"/></linearGradient></defs><path d="M14.300 1.500L24.500 10.700L14.300 20L4.800 10.700Z" fill="url(#gc2)" stroke="#000" stroke-width="1.300" stroke-dasharray="1.600 1.100"/><path d="M3 14H6.500V17.500H9.500V15.500L12.500 18.500V22.500H3ZM27 14H23.500V17.500H20.500V15.500L17.500 18.500V22.500H27Z" fill="#000"/><path d="M7 19.500H11M19 19.500H23" stroke="#fff" stroke-width="1" stroke-dasharray="1.500 1"/></svg><span class="t">Condition</span></div>
 <div class="row" style="top:182px"><svg class="ic" width="30" height="26" viewBox="0 0 30 26"><path d="M14 2L22 8.700L14 16L6.300 8.700Z" fill="#5a80b8" stroke="#000" stroke-width="1.200" stroke-dasharray="1.600 1.100"/><path d="M4 11H6.500V13L9 12V16.700H4ZM24 11H21.500V13L19 12V16.700H24Z" fill="#000"/><path d="M14 14V20" stroke="#000" stroke-width="1.800"/><path d="M10.500 19.200H17.500L14 23Z" fill="#000"/></svg><span class="t">Multiple Condition</span></div>
 <div class="row" style="top:208px"><svg class="ic" width="30" height="26" viewBox="0 0 30 26"><rect x="3.75" y="3.05" width="10.3" height="17.8" fill="#3d94f0" stroke="#0c0c24" stroke-width="1.500"/><path d="M5 19.6V4.3H12.8" fill="none" stroke="#8cc6ff" stroke-width="1.200"/><path d="M12.700000000000001 4.9V19.5H5.6" fill="none" stroke="#4c4c9c" stroke-width="1.200"/><path d="M6 6.8V17.2L12.3 12.0Z" fill="#000"/><g fill="none" stroke="#000" stroke-linecap="round"><path d="M17.500 8Q22.500 12 17.500 16" stroke-width="2.800"/><path d="M21.500 5Q29 12.200 21.500 19.500" stroke-width="2.600" stroke-dasharray="2.500 .6"/></g></svg><span class="t">Event creator</span></div>
 <div class="row" style="top:234px"><svg class="ic" width="30" height="26" viewBox="0 0 30 26"><g fill="none" stroke="#000" stroke-linecap="round"><path d="M4 8.500Q8.500 12 4 15.500" stroke-width="2.400"/><path d="M7.800 5.500Q14.300 12 7.800 19" stroke-width="2.400" stroke-dasharray="2.500 .6"/></g><rect x="13.95" y="2.75" width="10.3" height="18.0" fill="#3d94f0" stroke="#0c0c24" stroke-width="1.500"/><path d="M15.2 19.5V4H23.0" fill="none" stroke="#8cc6ff" stroke-width="1.200"/><path d="M22.9 4.6V19.4H15.799999999999999" fill="none" stroke="#4c4c9c" stroke-width="1.200"/><path d="M16.2 6.2V17.4L22.4 11.799999999999999Z" fill="#000"/></svg><span class="t">Wait</span></div>
 <div class="row" style="top:260px"><svg class="ic" width="30" height="26" viewBox="0 0 30 26"><rect x="11.95" y="2.35" width="12.3" height="10.5" fill="#3d94f0" stroke="#0c0c24" stroke-width="1.500"/><path d="M13.2 11.6V3.6H23.0" fill="none" stroke="#8cc6ff" stroke-width="1.200"/><path d="M22.9 4.2V11.5H13.799999999999999" fill="none" stroke="#4c4c9c" stroke-width="1.200"/><path d="M14.500 6H22M14.500 9.700H22" stroke="#000" stroke-width="1.800"/><path d="M3.300 5.500H7V3L11 6.500L7 10V7.500H3.300Z" fill="#fff" stroke="#000" stroke-width="1"/><path d="M15.500 14V18.700H8.500V21L3.500 17.700L8.500 14.500V16.700H13.500V14Z" fill="#fff" stroke="#000" stroke-width="1.100"/></svg><span class="t">Container operation</span></div>
 <div class="row" style="top:286px"><svg class="ic" width="30" height="26" viewBox="0 0 30 26"><rect x="3" y="4.900" width="19" height="2.600" fill="#5060a8"/><path d="M19.500 2L25.500 6.200L19.500 10.500" fill="#5060a8" stroke="#000" stroke-width="1.200" stroke-dasharray="1.600 .8"/><path d="M3 8H21" stroke="#000" stroke-width="1" stroke-dasharray="1.500 1"/><rect x="12" y="8" width="2.400" height="10" fill="#5060a8"/><path d="M7.500 13.500H18.500L13.200 18.500Z" fill="#000"/><path d="M9 11.500L12 13.500M17.500 11.500L14.500 13.500" stroke="#000" stroke-width="1.200"/><rect x="6" y="20" width="15" height="1.800" fill="#000"/></svg><span class="t">Process Control</span></div>
 <div class="row" style="top:312px"><svg class="ic" width="30" height="26" viewBox="0 0 30 26"><path d="M9.500 12V6.500Q9.500 2.500 13.500 2.500Q17.500 2.500 17.500 6.500V12" fill="none" stroke="#000" stroke-width="3.200" stroke-dasharray="1.700 .9"/><path d="M9.500 12V6.500Q9.500 2.500 13.500 2.500Q17.500 2.500 17.500 6.500V12" fill="none" stroke="#d8e4f0" stroke-width="1.200"/><path d="M3.300 13H21.300V10.500L26.800 14.800L21.300 19V16.600H3.300Z" fill="#fff" stroke="#000" stroke-width="1.100" stroke-linejoin="round"/><rect x="7" y="13.500" width="3" height="2.600" fill="#7ca0c0"/></svg><span class="t">Loop (Until)</span></div>
 <div class="row" style="top:338px"><svg class="ic" width="30" height="26" viewBox="0 0 30 26"><path d="M3 10.4H8.5V8.1L13.5 12L8.5 15.9V13.6H3Z" fill="#4a80d0" stroke="#000" stroke-width=".9" stroke-dasharray="1.700 .9"/><path d="M8.2 8.1L13.5 12L8.2 15.9" fill="none" stroke="#000" stroke-width="1.300"/><path d="M15.300 1.500V22.700" stroke="#000" stroke-width="1.300"/><path d="M16 4.4H22V2.1L27 6L22 9.9V7.6H16Z" fill="#4a80d0" stroke="#000" stroke-width=".9" stroke-dasharray="1.700 .9"/><path d="M21.7 2.1L27 6L21.7 9.9" fill="none" stroke="#000" stroke-width="1.300"/><path d="M16 16.4H22V14.1L27 18L22 21.9V19.6H16Z" fill="#4a80d0" stroke="#000" stroke-width=".9" stroke-dasharray="1.700 .9"/><path d="M21.7 14.1L27 18L21.7 21.9" fill="none" stroke="#000" stroke-width="1.300"/></svg><span class="t">Fork</span></div>
 <div class="row" style="top:364px"><svg class="ic" width="30" height="26" viewBox="0 0 30 26"><rect x="3.500" y="1.800" width="21" height="20.300" fill="#fff" stroke="#000" stroke-width="1" stroke-dasharray="1.500 1.500"/><path d="M10.700 4.400V19.500L18.500 12Z" fill="#cfcc9a"/><path d="M10.700 4.400V19.500" stroke="#a0a0a0" stroke-width="1.300"/></svg><span class="t">Undefined</span></div>
 <div class="row" style="top:390px"><svg class="ic" width="30" height="26" viewBox="0 0 30 26"><path d="M3 1.5V10.5L9 6.0Z" fill="#000"/><circle cx="17.300" cy="4.200" r="2.400" fill="#d0d8f8" stroke="#000" stroke-width="1.500"/><path d="M12 8H23" stroke="#000" stroke-width="1.700"/><path d="M9 14V16Q9.500 19.600 17.300 19.800Q25.300 19.600 25.300 16V14" fill="none" stroke="#000" stroke-width="3.200"/><rect x="15.800" y="6.500" width="3" height="14" fill="#000"/><rect x="16.600" y="6.500" width="1.400" height="13" fill="#c0c8f0"/><path d="M9 14.500V16Q9.500 19 17.300 19Q25.300 19 25.300 16V14.500" fill="none" stroke="#b0b8e8" stroke-width="1.200"/><path d="M7 17.500V12.700H11M27.300 17.500V12.700H23.500" fill="none" stroke="#000" stroke-width="1.500"/><path d="M12.500 21.200H22" stroke="#000" stroke-width="1.300"/></svg><span class="t">Ad Hoc Anchor</span></div>
 <div class="row" style="top:416px"><svg class="ic" width="30" height="26" viewBox="0 0 30 26"><path d="M14.200 7L22.600 16.200H5.800Z" fill="#000"/></svg><span class="t">Block</span></div>
 <div class="row" style="top:442px"><svg class="ic" width="30" height="26" viewBox="0 0 30 26"><rect x="6" y="6.900" width="16" height="3" fill="#000"/><path d="M14 11L22.400 20.200H5.600Z" fill="#000"/></svg><span class="t">Local Workflow</span></div>
 </div>
 <div class="a" style="left:7px;top:612px;width:438px;height:26px;background:#f9fbfe;border-left:2px solid #d5dde8;box-sizing:border-box"></div>
 <svg class="a" style="left:0;top:640px" width="468" height="30" viewBox="923 725 468 30"><path d="M923 746.500H1258C1272 746.500 1278 733.500 1293 733.500H1391" fill="none" stroke="#a9b8d0" stroke-width="1"/><path d="M923 747.500H1258C1272 747.500 1278 734.500 1293 734.500H1391" fill="none" stroke="#f6f9fd" stroke-width="1"/></svg>
 <div class="a dbtn" style="left:393px;top:661px" id="dok"><svg class="a" style="left:-1px;top:-1px" width="31" height="31" viewBox="1316 746 31 31"><path d="M1322.500 761.500L1327 768.500L1339.500 755" fill="none" stroke="#0c1c04" stroke-width="5.600" stroke-linejoin="miter"/><path d="M1322.500 761.500L1327 768.500L1339.500 755" fill="none" stroke="#3c9c10" stroke-width="3"/><path d="M1328 765L1338.500 754.500" stroke="#70c030" stroke-width="1"/></svg></div>
 <div class="a dbtn" style="left:427px;top:661px" id="dcancel"><svg class="a" style="left:-1px;top:-1px" width="31" height="31" viewBox="1350 746 31 31"><path d="M1358 754.500L1370.500 767.500M1370.500 754.500L1358 767.500" fill="none" stroke="#50040c" stroke-width="5.400"/><path d="M1358 754.500L1370.500 767.500M1370.500 754.500L1358 767.500" fill="none" stroke="#e80420" stroke-width="3.200"/><path d="M1357.500 755.500L1360 758M1369 766L1371 768M1370.500 755L1368.500 757M1358 767L1360 765" stroke="#f898a8" stroke-width="1.600"/></svg></div>
</div>
<div class="a" id="dlgb"></div>
<svg class="a" style="left:1025px;top:210px" width="50" height="40" viewBox="1025 210 50 40"><path d="M1045 217.800Q1037.500 217 1036.500 224.500Q1037 228.500 1045 230.500Q1052 233 1057.500 238" fill="none" stroke="#e84843" stroke-width="6" stroke-linecap="round" stroke-linejoin="round"/><path d="M1047.500 226.500L1060.800 221.500" fill="none" stroke="#e84843" stroke-width="6" stroke-linecap="round"/></svg>
</body></html>
